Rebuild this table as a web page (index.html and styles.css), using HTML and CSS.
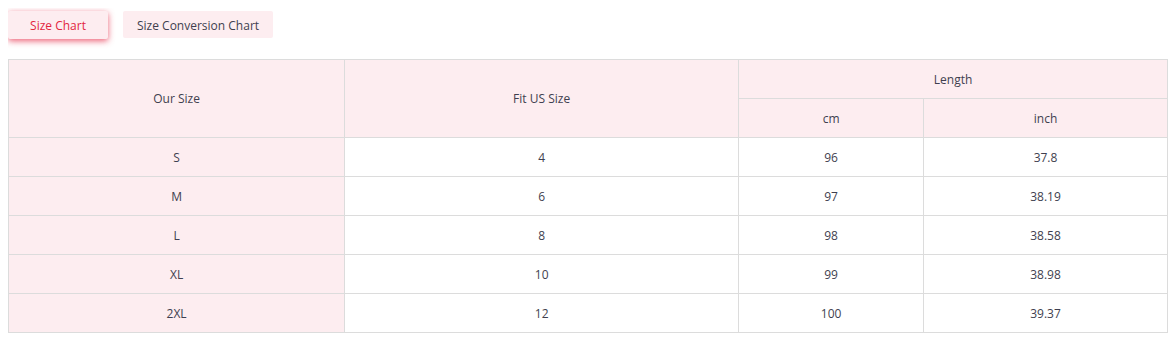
FILE: index.html
```html
<!DOCTYPE html>
<html lang="en">
<head>
<meta charset="utf-8">
<title>Size Chart</title>
<link rel="stylesheet" href="styles.css">
</head>
<body>
<div class="tabs">
  <button class="tab tab-active">Size Chart</button>
  <button class="tab">Size Conversion Chart</button>
</div>
<table class="chart">
  <colgroup>
    <col class="c1"><col class="c2"><col class="c3"><col class="c4">
  </colgroup>
  <thead>
    <tr>
      <th rowspan="2" class="pink">Our Size</th>
      <th rowspan="2" class="pink">Fit US Size</th>
      <th colspan="2" class="pink">Length</th>
    </tr>
    <tr>
      <th class="pink">cm</th>
      <th class="pink">inch</th>
    </tr>
  </thead>
  <tbody>
    <tr><td class="pink">S</td><td>4</td><td>96</td><td>37.8</td></tr>
    <tr><td class="pink">M</td><td>6</td><td>97</td><td>38.19</td></tr>
    <tr><td class="pink">L</td><td>8</td><td>98</td><td>38.58</td></tr>
    <tr><td class="pink">XL</td><td>10</td><td>99</td><td>38.98</td></tr>
    <tr><td class="pink">2XL</td><td>12</td><td>100</td><td>39.37</td></tr>
  </tbody>
</table>
</body>
</html>
```
FILE: styles.css
```css
body {
  margin: 8px;
  font-family: "Open Sans", "Liberation Sans", sans-serif;
  font-size: 12px;
  color: #3f3f4f;
  background: #fff;
}
.tabs {
  display: flex;
  gap: 15px;
  margin-top: 3px;
  margin-bottom: 20px;
}
.tab {
  font-family: inherit;
  font-size: 12px;
  color: #3f3f4f;
  background: #fdedf0;
  border: none;
  border-radius: 2px;
  height: 27px;
  padding: 1px 14px 0;
  min-width: 100px;
  cursor: pointer;
}
.tab-active {
  color: #e3263f;
  height: 28px;
  box-shadow: 0 2px 6px rgba(228, 30, 60, 0.7);
}
.chart {
  width: 100%;
  border-collapse: collapse;
  table-layout: fixed;
}
.c1 { width: 29%; }
.c2 { width: 34%; }
.c3 { width: 15.95%; }
.c4 { width: 21.05%; }
.chart th,
.chart td {
  border: 1px solid #dcdcdc;
  height: 37px;
  padding: 1px 0 0;
  text-align: center;
  vertical-align: middle;
  font-weight: normal;
  line-height: 18px;
}
.pink {
  background: #fdedf0;
}
```
